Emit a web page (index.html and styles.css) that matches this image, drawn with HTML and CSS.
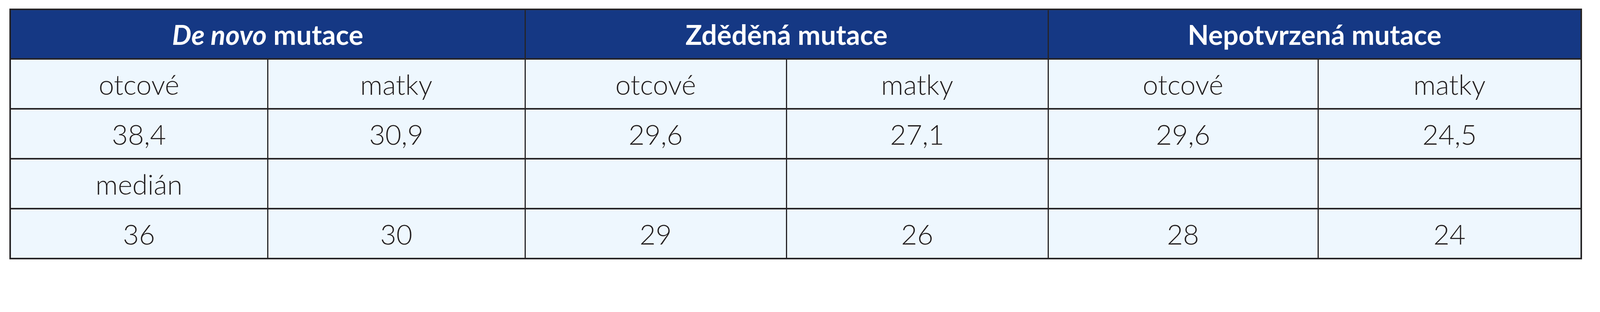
FILE: index.html
```html
<!DOCTYPE html>
<html lang="cs">
<head>
<meta charset="utf-8">
<title>Tabulka</title>
<link rel="stylesheet" href="styles.css">
</head>
<body>
<table class="data">
  <colgroup>
    <col class="c1"><col class="c2"><col class="c3"><col class="c4"><col class="c5"><col class="c6">
  </colgroup>
  <thead>
    <tr class="head">
      <th colspan="2"><em>De novo</em> mutace</th>
      <th colspan="2">Zděděná mutace</th>
      <th colspan="2">Nepotvrzená mutace</th>
    </tr>
  </thead>
  <tbody>
    <tr><td>otcové</td><td>matky</td><td>otcové</td><td>matky</td><td>otcové</td><td>matky</td></tr>
    <tr><td>38,4</td><td>30,9</td><td>29,6</td><td>27,1</td><td>29,6</td><td>24,5</td></tr>
    <tr><td>medián</td><td></td><td></td><td></td><td></td><td></td></tr>
    <tr><td>36</td><td>30</td><td>29</td><td>26</td><td>28</td><td>24</td></tr>
  </tbody>
</table>
</body>
</html>
```
FILE: styles.css
```css
html, body {
  margin: 0;
  background: #ffffff;
}
body {
  padding: 22px 0 0 24px;
  font-family: Lato, "Open Sans", sans-serif;
}
.data {
  border-collapse: collapse;
  table-layout: fixed;
  width: 4024px;
  border: 4px solid #262426;
}
.c1 { width: 659px; }
.c2 { width: 659px; }
.c3 { width: 669px; }
.c4 { width: 670px; }
.c5 { width: 691px; }
.c6 { width: 674px; }
.head th {
  background: #153884;
  color: #ffffff;
  font-weight: 700;
  font-size: 70px;
  height: 123px;
  padding: 0;
  border: 3px solid #262426;
  border-bottom-width: 4px;
  text-align: center;
  vertical-align: middle;
}
.head em {
  font-style: italic;
}
.data td {
  background: #eef7fe;
  color: #231f20;
  font-weight: 300;
  font-size: 71px;
  height: 124px;
  padding: 0;
  text-align: center;
  vertical-align: middle;
  border-left: 3px solid #262426;
  border-right: 3px solid #262426;
  border-top: 4px solid #262426;
  border-bottom: 4px solid #262426;
}
```
